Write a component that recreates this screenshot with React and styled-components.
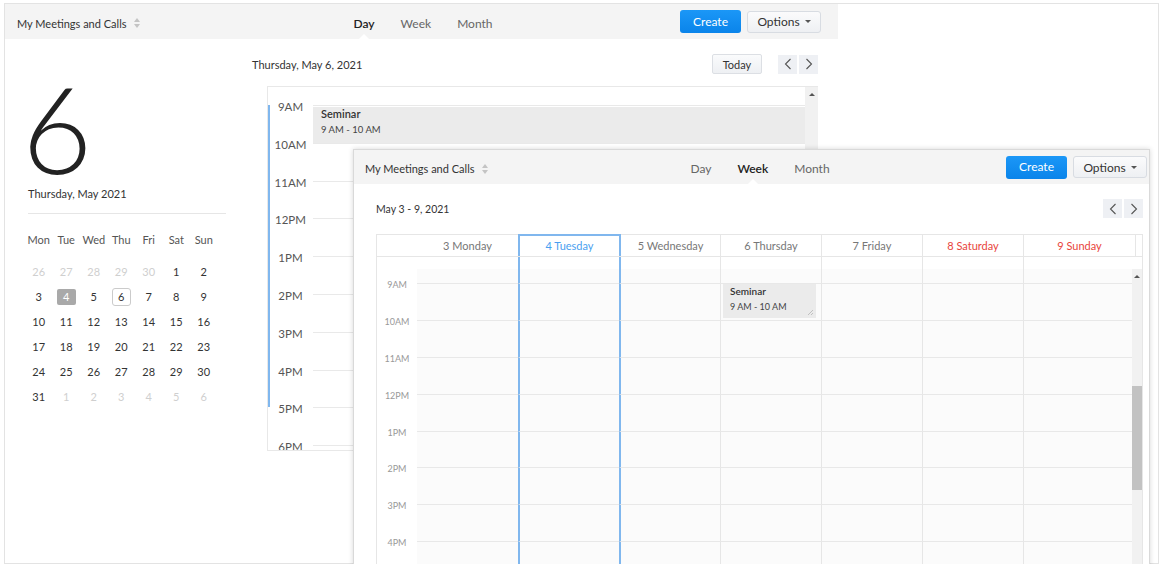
import React from "react";
import styled, { createGlobalStyle } from "styled-components";

const GlobalStyle = createGlobalStyle`
  html, body { margin: 0; padding: 0; background: #fff; overflow: hidden; }
  body { font-family: Lato, "Liberation Sans", sans-serif; color: #333; }
  * { box-sizing: border-box; }
`;

const BLUE_LINE = "#80b7ee";

const dayHours = ["9AM", "10AM", "11AM", "12PM", "1PM", "2PM", "3PM", "4PM", "5PM", "6PM"];
const weekHours = ["9AM", "10AM", "11AM", "12PM", "1PM", "2PM", "3PM", "4PM", "5PM"];

const weekDays = [
  { label: "3 Monday" },
  { label: "4 Tuesday", today: true },
  { label: "5 Wednesday" },
  { label: "6 Thursday", event: true },
  { label: "7 Friday" },
  { label: "8 Saturday", weekend: true },
  { label: "9 Sunday", weekend: true },
];

const monthRows = [
  [[26, "muted"], [27, "muted"], [28, "muted"], [29, "muted"], [30, "muted"], [1], [2]],
  [[3], [4, "today"], [5], [6, "selected"], [7], [8], [9]],
  [[10], [11], [12], [13], [14], [15], [16]],
  [[17], [18], [19], [20], [21], [22], [23]],
  [[24], [25], [26], [27], [28], [29], [30]],
  [[31], [1, "muted"], [2, "muted"], [3, "muted"], [4, "muted"], [5, "muted"], [6, "muted"]],
];

/* ---------- frame ---------- */

const Stage = styled.div`
  position: relative;
  margin: 3px 0 0 4px;
  width: 1155px;
  height: 561px;
  border: 1px solid #e3e3e3;
  background: #fff;
`;

const BackWindow = styled.div`
  width: 833px;
  height: 100%;
  display: flex;
  flex-direction: column;
`;

const FrontWindow = styled.div`
  position: absolute;
  left: 348px;
  top: 145px;
  width: 797px;
  height: 440px;
  background: #fff;
  border: 1px solid #d9d9d9;
  box-shadow: 0 0 5px rgba(0, 0, 0, 0.16);
  display: flex;
  flex-direction: column;
  overflow: hidden;
`;

/* ---------- toolbar ---------- */

const Toolbar = styled.div`
  display: grid;
  grid-template-columns: 1fr auto 1fr;
  align-items: center;
  flex: none;
  height: ${(p) => p.$h}px;
  padding: ${(p) => p.$pad};
  background: #f4f4f4;
`;

const Title = styled.div`
  display: flex;
  align-items: center;
  gap: 7px;
  padding-top: 3px;
  font-size: 11px;
  color: #333;
  white-space: nowrap;
`;

const Tabs = styled.div`
  display: flex;
  align-self: stretch;
  margin-left: 8px;
`;

const Tab = styled.div`
  position: relative;
  display: flex;
  align-items: center;
  padding: 3px 13px 0;
  font-size: 12px;
  color: ${(p) => (p.$active ? "#222" : "#666")};
  font-weight: ${(p) => (p.$active ? 600 : 400)};

  &::after {
    content: "";
    display: ${(p) => (p.$active ? "block" : "none")};
    position: absolute;
    left: 50%;
    bottom: 0;
    margin-left: -5px;
    border-left: 5px solid transparent;
    border-right: 5px solid transparent;
    border-bottom: 5px solid #fff;
  }
`;

const Actions = styled.div`
  justify-self: end;
  display: flex;
  align-items: center;
  gap: 6px;
`;

const CreateButton = styled.div`
  width: 61px;
  height: 23px;
  display: flex;
  align-items: center;
  justify-content: center;
  padding-bottom: 1px;
  border-radius: 3px;
  background: linear-gradient(#1b97f7, #0a84ea);
  color: #fff;
  font-size: 12px;
`;

const OptionsButton = styled.div`
  width: 74px;
  height: 22px;
  display: flex;
  align-items: center;
  justify-content: center;
  gap: 5px;
  border: 1px solid #d8dce2;
  border-radius: 3px;
  background: linear-gradient(#fbfbfc, #eef0f3);
  color: #333;
  font-size: 12px;
`;

const Caret = styled.span`
  width: 0;
  height: 0;
  border-left: 3px solid transparent;
  border-right: 3px solid transparent;
  border-top: 3px solid #555;
`;

const SortIcon = () => (
  <svg width="6" height="10" viewBox="0 0 6 10">
    <path d="M3 0 L6 4 H0 Z" fill="#c4c4c4" />
    <path d="M3 10 L6 6 H0 Z" fill="#c4c4c4" />
  </svg>
);

function CalToolbar({ active, h, pad }) {
  return (
    <Toolbar $h={h} $pad={pad}>
      <Title>
        My Meetings and Calls <SortIcon />
      </Title>
      <Tabs>
        {["Day", "Week", "Month"].map((t) => (
          <Tab key={t} $active={t === active}>
            {t}
          </Tab>
        ))}
      </Tabs>
      <Actions>
        <CreateButton>Create</CreateButton>
        <OptionsButton>
          Options <Caret />
        </OptionsButton>
      </Actions>
    </Toolbar>
  );
}

/* ---------- nav ---------- */

const TitleRow = styled.div`
  display: flex;
  align-items: center;
  justify-content: space-between;
  height: ${(p) => p.$h}px;
`;

const DateTitle = styled.div`
  font-size: ${(p) => p.$size}px;
  color: #333;
`;

const NavGroup = styled.div`
  display: flex;
  align-items: center;
  gap: 2px;
`;

const TodayButton = styled.div`
  width: 50px;
  height: 20px;
  margin-right: 14px;
  display: flex;
  align-items: center;
  justify-content: center;
  border: 1px solid #dcdfe4;
  border-radius: 2px;
  background: linear-gradient(#fafbfc, #eef0f3);
  font-size: 11px;
  color: #333;
`;

const NavButton = styled.div`
  width: 19px;
  height: 19px;
  display: flex;
  align-items: center;
  justify-content: center;
  background: #eef0f4;
`;

const Chevron = ({ dir }) => (
  <svg width="8" height="12" viewBox="0 0 8 12">
    <polyline
      points={dir === "left" ? "6.5,1 1.5,6 6.5,11" : "1.5,1 6.5,6 1.5,11"}
      fill="none"
      stroke="#555"
      strokeWidth="1.1"
    />
  </svg>
);

/* ---------- left panel ---------- */

const BackBody = styled.div`
  flex: 1;
  display: flex;
  min-height: 0;
`;

const LeftPanel = styled.div`
  width: 247px;
  flex: none;
  padding-left: 23px;
`;

const BigDay = styled.div`
  margin: 39px 0 0 -6px;
  font-size: 121px;
  line-height: 100px;
  font-weight: 300;
  color: #222;
`;

const DateCaption = styled.div`
  margin-top: 8px;
  font-size: 11px;
  line-height: 16px;
`;

const Divider = styled.div`
  width: 198px;
  height: 1px;
  margin-top: 11px;
  background: #e6e6e6;
`;

const MiniCal = styled.div`
  margin: 17px 0 0 -3px;
  display: grid;
  grid-template-columns: repeat(7, 27.5px);
  grid-template-rows: 28px;
  grid-auto-rows: 25px;
  font-size: 11px;
`;

const WeekdayName = styled.div`
  align-self: start;
  display: flex;
  align-items: center;
  justify-content: center;
  color: #555;
  height: 16px;
`;

const DayCellMini = styled.div`
  display: flex;
  align-items: center;
  justify-content: center;
`;

const DayNum = styled.span`
  width: 19px;
  height: ${(p) => (p.$kind === "selected" ? 18 : 16)}px;
  display: flex;
  align-items: center;
  justify-content: center;
  border-radius: ${(p) => (p.$kind === "selected" ? 3 : 2)}px;
  color: ${(p) =>
    p.$kind === "muted" ? "#cfcfcf" : p.$kind === "today" ? "#fff" : "#333"};
  background: ${(p) => (p.$kind === "today" ? "#a9a9a9" : "transparent")};
  border: ${(p) => (p.$kind === "selected" ? "1px solid #cbcbcb" : "none")};
`;

/* ---------- day view ---------- */

const DaySection = styled.div`
  width: 566px;
  flex: none;
  padding-top: 15px;
`;

const DayGrid = styled.div`
  margin: 12px 0 0 15px;
  height: 365px;
  display: flex;
  border-top: 1px solid #e8e8e8;
  border-left: 1px solid #e8e8e8;
  border-bottom: 1px solid #e8e8e8;
  overflow: hidden;
`;

const DayRows = styled.div`
  flex: 1;
  padding-top: 18px;
`;

const HourRow = styled.div`
  display: grid;
  grid-template-columns: 45px 1fr;
  height: 37.8px;
  box-shadow: ${(p) => (p.$working ? `inset 2px 0 0 ${BLUE_LINE}` : "none")};
`;

const TimeLabel = styled.div`
  align-self: start;
  height: 14px;
  text-align: center;
  font-size: ${(p) => p.$size}px;
  line-height: 14px;
  color: ${(p) => p.$color};
  transform: translateY(-5px);
  white-space: nowrap;
`;

const LineCell = styled.div`
  position: relative;
  border-top: 1px solid #e9e9e9;
`;

const EventBlock = styled.div`
  position: absolute;
  top: ${(p) => p.$top}px;
  left: ${(p) => p.$left}px;
  right: ${(p) => p.$right}px;
  height: ${(p) => p.$h}px;
  padding: ${(p) => p.$pad};
  background: #ebebeb;
  overflow: hidden;
`;

const EventName = styled.div`
  font-size: ${(p) => p.$size}px;
  font-weight: 600;
  color: #333;
  line-height: 14px;
`;

const EventTime = styled.div`
  margin-top: ${(p) => p.$gap}px;
  font-size: ${(p) => p.$size}px;
  color: #444;
  line-height: 12px;
`;

const ResizeHandle = styled.svg`
  position: absolute;
  right: 2px;
  bottom: 2px;
`;

const Scrollbar = styled.div`
  width: ${(p) => p.$w}px;
  flex: none;
  background: #f1f1f1;
  display: flex;
  flex-direction: column;
  align-items: center;
`;

const ArrowUp = styled.span`
  margin-top: 6px;
  width: 0;
  height: 0;
  border-left: 3px solid transparent;
  border-right: 3px solid transparent;
  border-bottom: 3px solid #555;
`;

const Thumb = styled.div`
  margin-top: ${(p) => p.$top}px;
  width: 100%;
  height: ${(p) => p.$h}px;
  background: #c2c2c2;
`;

/* ---------- week view ---------- */

const FrontBody = styled.div`
  padding: 15px 6px 0 22px;
  flex: 1;
`;

const WeekGrid = styled.div`
  margin-top: 16px;
  border-left: 1px solid #e6e6e6;
  border-right: 1px solid #e6e6e6;
`;

const COLS = "40px repeat(6, 101px) 1fr";

const WeekHeadRow = styled.div`
  display: grid;
  grid-template-columns: ${COLS} 7px;
  height: 23px;
  border-bottom: 1px solid #e6e6e6;
`;

const HeadCell = styled.div`
  display: flex;
  align-items: center;
  justify-content: center;
  font-size: 11px;
  color: ${(p) => (p.$today ? "#4a9ff0" : p.$weekend ? "#e8453c" : "#777")};
  border-left: ${(p) =>
    p.$noLine ? "none" : p.$blue ? `2px solid ${BLUE_LINE}` : "1px solid #e6e6e6"};
  box-shadow: inset 0 ${(p) => (p.$today ? 2 : 1)}px 0
    ${(p) => (p.$today ? BLUE_LINE : "#e6e6e6")};
`;

const WeekRowGrid = styled.div`
  display: grid;
  grid-template-columns: ${COLS};
  height: ${(p) => p.$h}px;
`;

const Gutter = styled.div`
  position: relative;
  background: #fff;
`;

const WeekCell = styled.div`
  position: relative;
  background: ${(p) => (p.$tint ? "#fbfbfb" : "#fff")};
  border-left: ${(p) =>
    p.$noLine ? "none" : p.$blue ? `2px solid ${BLUE_LINE}` : "1px solid #e6e6e6"};
  border-top: ${(p) => (p.$line ? "1px solid #e8e8e8" : "none")};
`;

const WeekScroll = styled.div`
  display: flex;
`;

const WeekRows = styled.div`
  flex: 1;
`;

function weekCells({ line, tint, renderEvent }) {
  return weekDays.map((d, i) => (
    <WeekCell
      key={d.label}
      $noLine={i === 0}
      $blue={d.today || (i > 0 && weekDays[i - 1].today)}
      $line={line}
      $tint={tint}
    >
      {renderEvent && d.event ? renderEvent() : null}
    </WeekCell>
  ));
}

const Grip = () => (
  <ResizeHandle width="7" height="7" viewBox="0 0 7 7">
    <path d="M6 1 L1 6 M6 4 L4 6" stroke="#b5b5b5" strokeWidth="0.8" />
  </ResizeHandle>
);

export default function App() {
  return (
    <>
      <GlobalStyle />
      <Stage>
        <BackWindow>
          <CalToolbar active="Day" h={35} pad="0 17px 0 12px" />
          <BackBody>
            <LeftPanel>
              <BigDay>6</BigDay>
              <DateCaption>Thursday, May 2021</DateCaption>
              <Divider />
              <MiniCal>
                {["Mon", "Tue", "Wed", "Thu", "Fri", "Sat", "Sun"].map((w) => (
                  <WeekdayName key={w}>{w}</WeekdayName>
                ))}
                {monthRows.flat().map(([n, kind], i) => (
                  <DayCellMini key={i}>
                    <DayNum $kind={kind}>{n}</DayNum>
                  </DayCellMini>
                ))}
              </MiniCal>
            </LeftPanel>

            <DaySection>
              <TitleRow $h={20}>
                <DateTitle $size={11}>Thursday, May 6, 2021</DateTitle>
                <NavGroup>
                  <TodayButton>Today</TodayButton>
                  <NavButton>
                    <Chevron dir="left" />
                  </NavButton>
                  <NavButton>
                    <Chevron dir="right" />
                  </NavButton>
                </NavGroup>
              </TitleRow>
              <DayGrid>
                <DayRows>
                  {dayHours.map((h, i) => (
                    <HourRow key={h} $working={i < 8}>
                      <TimeLabel $size={11.5} $color="#555">
                        {h}
                      </TimeLabel>
                      <LineCell>
                        {i === 0 && (
                          <EventBlock $top={1} $left={0} $right={0} $h={36} $pad="0 8px">
                            <EventName $size={11}>Seminar</EventName>
                            <EventTime $size={9.5} $gap={3}>
                              9 AM - 10 AM
                            </EventTime>
                          </EventBlock>
                        )}
                      </LineCell>
                    </HourRow>
                  ))}
                </DayRows>
                <Scrollbar $w={13}>
                  <ArrowUp />
                </Scrollbar>
              </DayGrid>
            </DaySection>
          </BackBody>
        </BackWindow>

        <FrontWindow>
          <CalToolbar active="Week" h={34} pad="0 2px 0 11px" />
          <FrontBody>
            <TitleRow $h={19}>
              <DateTitle $size={10.5}>May 3 - 9, 2021</DateTitle>
              <NavGroup>
                <NavButton>
                  <Chevron dir="left" />
                </NavButton>
                <NavButton>
                  <Chevron dir="right" />
                </NavButton>
              </NavGroup>
            </TitleRow>
            <WeekGrid>
              <WeekHeadRow>
                <HeadCell $noLine />
                {weekDays.map((d, i) => (
                  <HeadCell
                    key={d.label}
                    $noLine={i === 0}
                    $blue={d.today || (i > 0 && weekDays[i - 1].today)}
                    $today={d.today}
                    $weekend={d.weekend}
                  >
                    {d.label}
                  </HeadCell>
                ))}
                <HeadCell />
              </WeekHeadRow>
              <WeekRowGrid $h={12}>
                <Gutter />
                {weekCells({ line: false, tint: false })}
              </WeekRowGrid>
              <WeekScroll>
                <WeekRows>
                  <WeekRowGrid $h={14}>
                    <Gutter />
                    {weekCells({ line: false, tint: true })}
                  </WeekRowGrid>
                  {weekHours.map((h, hi) => (
                    <WeekRowGrid key={h} $h={36.9}>
                      <Gutter>
                        <TimeLabel $size={9} $color="#999">
                          {h}
                        </TimeLabel>
                      </Gutter>
                      {weekCells({
                        line: true,
                        tint: true,
                        renderEvent:
                          hi === 0
                            ? () => (
                                <EventBlock $top={0} $left={2} $right={5} $h={34} $pad="0 7px">
                                  <EventName $size={10}>Seminar</EventName>
                                  <EventTime $size={9} $gap={3}>
                                    9 AM - 10 AM
                                  </EventTime>
                                  <Grip />
                                </EventBlock>
                              )
                            : null,
                      })}
                    </WeekRowGrid>
                  ))}
                </WeekRows>
                <Scrollbar $w={10}>
                  <ArrowUp />
                  <Thumb $top={108} $h={104} />
                </Scrollbar>
              </WeekScroll>
            </WeekGrid>
          </FrontBody>
        </FrontWindow>
      </Stage>
    </>
  );
}
